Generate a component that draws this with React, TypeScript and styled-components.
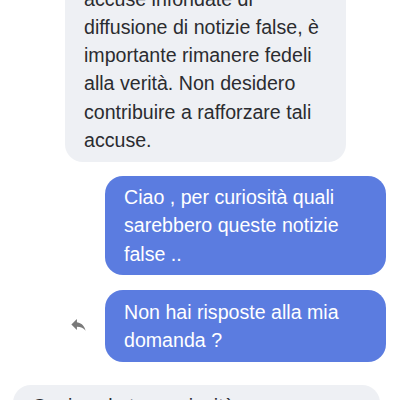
import styled, { createGlobalStyle } from "styled-components";

const GlobalStyle = createGlobalStyle`
  html, body {
    margin: 0;
    padding: 0;
    background: #ffffff;
  }
  body {
    font-family: "Liberation Sans", Arial, Helvetica, sans-serif;
    -webkit-font-smoothing: antialiased;
  }
`;

const Screen = styled.div`
  width: 400px;
  height: 400px;
  overflow: hidden;
  background: #ffffff;
`;

// the thread is scrolled: the first bubble starts above the window
const Thread = styled.div`
  display: flex;
  flex-direction: column;
  margin-top: -23px;
`;

const Row = styled.div<{ $mine?: boolean; $gap: number; $inset: number }>`
  display: flex;
  align-items: center;
  justify-content: ${(p) => (p.$mine ? "flex-end" : "flex-start")};
  gap: 17px;
  margin-top: ${(p) => p.$gap}px;
  padding: ${(p) => (p.$mine ? `0 14px 0 0` : `0 0 0 ${p.$inset}px`)};
`;

const Bubble = styled.div<{ $mine?: boolean; $width: number }>`
  box-sizing: border-box;
  width: ${(p) => p.$width}px;
  padding: 7.5px 19px;
  border-radius: 18px;
  background: ${(p) => (p.$mine ? "#5b7ce0" : "#eef0f4")};
  color: ${(p) => (p.$mine ? "#ffffff" : "#2b2c30")};
  font-size: 19.6px;
  line-height: 28.25px;
`;

const ReplyIcon = styled.svg`
  width: 19px;
  height: 19px;
  flex-shrink: 0;
  margin-bottom: 4px;
  fill: #7a7a7a;
`;

const messages = [
  {
    mine: false,
    gap: 0,
    text: "accuse infondate di diffusione di notizie false, è importante rimanere fedeli alla verità. Non desidero contribuire a rafforzare tali accuse.",
  },
  {
    mine: true,
    gap: 14,
    text: "Ciao , per curiosità quali sarebbero queste notizie false ..",
  },
  {
    mine: true,
    gap: 15,
    reply: true,
    text: "Non hai risposte alla mia domanda ?",
  },
];

export default function App() {
  return (
    <Screen>
      <GlobalStyle />
      <Thread>
        {messages.map((m, idx) => (
          <Row key={idx} $mine={m.mine} $gap={m.gap} $inset={65}>
            {m.reply && (
              <ReplyIcon viewBox="0 0 24 24">
                <path d="M10 9V5l-7 7 7 7v-4.1c5 0 8.5 1.6 11 5.1-1-5-4-10-11-11z" />
              </ReplyIcon>
            )}
            <Bubble $mine={m.mine} $width={281}>
              {m.text}
            </Bubble>
          </Row>
        ))}
        <Row $gap={23} $inset={13}>
          <Bubble $width={367}>
            Capisco la tua curiosità, ma non posso fornire dettagli.
          </Bubble>
        </Row>
      </Thread>
    </Screen>
  );
}
